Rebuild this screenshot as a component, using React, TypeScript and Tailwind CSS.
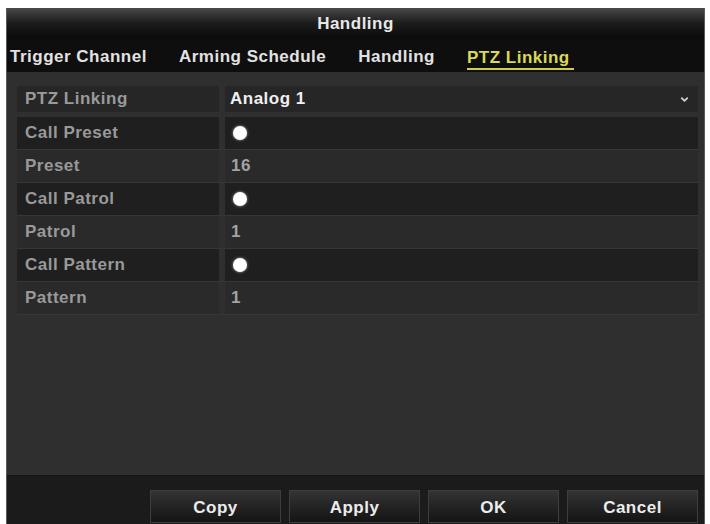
import React from 'react';
import { ChevronDown } from 'lucide-react';

const font = { fontFamily: '"Liberation Sans", Arial, sans-serif' };

const rows = [
  { label: 'Call Preset', value: 'dot', dark: true },
  { label: 'Preset', value: '16', dark: false },
  { label: 'Call Patrol', value: 'dot', dark: true },
  { label: 'Patrol', value: '1', dark: false },
  { label: 'Call Pattern', value: 'dot', dark: true },
  { label: 'Pattern', value: '1', dark: false },
];

const tabs = ['Trigger Channel', 'Arming Schedule', 'Handling', 'PTZ Linking'];

const App = () => {
  return (
    <div className="w-[710px] h-[524px] bg-white pt-[8px] pl-[6px] pr-[5px] overflow-hidden tracking-[0.5px]" style={font}>
      <div className="flex flex-col h-[516px] bg-[#2f2f2f] border-l border-r border-[#5a5a5a]">
        {/* title */}
        <div className="h-[30px] flex items-center justify-center pt-[2px] bg-gradient-to-b from-[#4a4a4a] via-[#1c1c1c] to-[#0b0b0b] text-[17px] font-bold text-[#e8e8e8]">
          Handling
        </div>

        {/* tabs */}
        <div className="h-[34px] flex items-center gap-[32px] pl-[3px] pt-[3px] bg-[#0e0e0e] text-[17px] font-bold text-[#e2e2e2]">
          {tabs.map((t) =>
            t === 'PTZ Linking' ? (
              <span key={t} className="text-[#d9d957] border-b-2 border-[#cfcf4a] leading-[20px] mt-[4px] pr-[4px]">
                {t}
              </span>
            ) : (
              <span key={t}>{t}</span>
            )
          )}
        </div>

        {/* content */}
        <div className="flex-1 pl-[10px] pr-[6px] pt-[14px]">
          <div className="flex h-[26px] gap-[6px]">
            <div className="w-[202px] bg-[#262626] flex items-center pl-[8px] text-[17px] font-bold text-[#9a9a9a]">
              PTZ Linking
            </div>
            <div className="flex-1 bg-[#262626] flex items-center justify-between pl-[5px] pr-[8px] text-[17px] font-bold text-[#f0f0f0]">
              <span>Analog 1</span>
              <ChevronDown size={11} strokeWidth={4} className="text-[#cfcfcf]" />
            </div>
          </div>

          <div className="mt-[5px] flex flex-col">
            {rows.map((r) => (
              <div key={r.label} className="flex h-[33px] gap-[6px] border-b border-[#363636]">
                <div
                  className={`w-[202px] flex items-center pl-[8px] text-[17px] font-bold text-[#999999] ${
                    r.dark ? 'bg-[#1f1f1f]' : 'bg-[#2a2a2a]'
                  }`}
                >
                  {r.label}
                </div>
                <div
                  className={`flex-1 flex items-center pl-[6px] text-[17px] font-bold text-[#a3a3a3] ${
                    r.dark ? 'bg-[#1f1f1f]' : 'bg-[#2a2a2a]'
                  }`}
                >
                  {r.value === 'dot' ? (
                    <span className="ml-[2px] w-[14px] h-[14px] rounded-full bg-white shadow-[0_0_3px_rgba(255,255,255,0.6)]" />
                  ) : (
                    r.value
                  )}
                </div>
              </div>
            ))}
          </div>
        </div>

        {/* footer */}
        <div className="h-[49px] flex justify-end gap-[8px] pr-[6px] pt-[14px] bg-[#1b1b1b] border-t border-[#141414]">
          {['Copy', 'Apply', 'OK', 'Cancel'].map((b) => (
            <button
              key={b}
              className="w-[131px] h-[33px] flex items-center justify-center pt-[2px] bg-gradient-to-b from-[#343434] to-[#141414] border border-[#3e3e3e] text-[17px] font-bold text-[#ececec]"
            >
              {b}
            </button>
          ))}
        </div>
      </div>
    </div>
  );
};

export default App;
